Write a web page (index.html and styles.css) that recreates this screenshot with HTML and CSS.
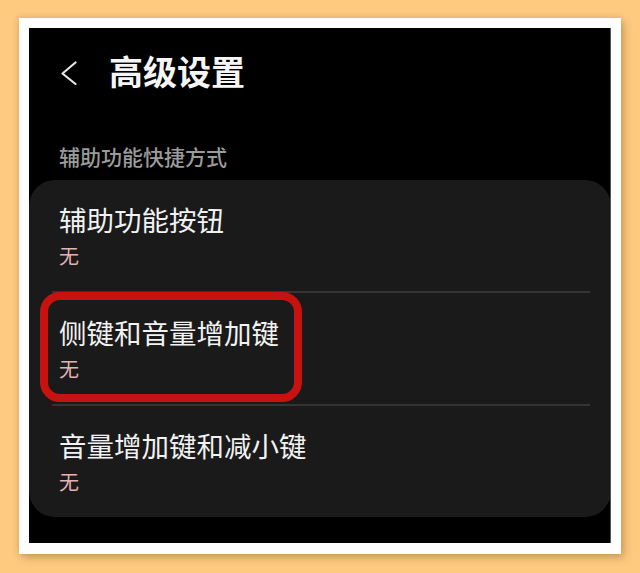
FILE: index.html
```html
<!DOCTYPE html>
<html lang="zh-CN">
<head>
<meta charset="utf-8">
<link rel="stylesheet" href="styles.css">
</head>
<body>
<div class="frame">
  <div class="screen">
    <div class="header">
      <svg class="back" width="16" height="24" viewBox="0 0 16 24"><path d="M14.5 1.5 L1.5 12.5 L14.5 23" fill="none" stroke="#e6e6e6" stroke-width="2.2" stroke-linecap="round" stroke-linejoin="round"/></svg>
      <div class="title">高级设置</div>
    </div>
    <div class="section">辅助功能快捷方式</div>
    <div class="card">
      <div class="item">
        <div class="item-title">辅助功能按钮</div>
        <div class="item-sub">无</div>
      </div>
      <div class="divider"></div>
      <div class="item">
        <div class="item-title">侧键和音量增加键</div>
        <div class="item-sub">无</div>
      </div>
      <div class="divider"></div>
      <div class="item">
        <div class="item-title">音量增加键和减小键</div>
        <div class="item-sub">无</div>
      </div>
    </div>
    <div class="highlight"></div>
  </div>
</div>
</body>
</html>
```

FILE: styles.css
```css
html, body {
  margin: 0;
  padding: 0;
}
body {
  width: 640px;
  height: 573px;
  background: #fdca80;
  overflow: hidden;
  font-family: "Noto Sans CJK SC", "Noto Sans", sans-serif;
}
.frame {
  margin: 18px 0 0 19px;
  width: 582px;
  height: 515px;
  padding: 10px 10px 11px 10px;
  background: #ffffff;
  box-shadow: 3px 4px 8px rgba(120, 80, 20, 0.35), -1px -1px 6px rgba(120, 80, 20, 0.15);
}
.screen {
  position: relative;
  width: 582px;
  height: 515px;
  background: #000000;
  overflow: hidden;
  border-right: 1px solid #555;
  box-sizing: border-box;
}
.header {
  display: flex;
  align-items: center;
  height: 40px;
  margin-top: 23px;
  padding-left: 32px;
}
.back {
  display: block;
  margin-right: 32px;
  margin-top: 3px;
}
.title {
  color: #f5f5f5;
  font-size: 34px;
  line-height: 40px;
  font-weight: 700;
}
.section {
  margin-top: 52px;
  padding-left: 30px;
  color: #9b9b9b;
  font-size: 21px;
  line-height: 26px;
  font-weight: 500;
}
.card {
  margin-top: 11px;
  width: 582px;
  background: #1a1a1a;
  border-radius: 26px;
}
.item {
  height: 111px;
  box-sizing: border-box;
  padding: 22px 0 0 30px;
}
.item-title {
  color: #f2f2f2;
  font-size: 27.5px;
  line-height: 34px;
}
.item-sub {
  margin-top: 8px;
  color: #e4b2b2;
  font-size: 20px;
  line-height: 24px;
}
.divider {
  height: 2px;
  margin: 0 21px 0 23px;
  background: #343434;
}
.highlight {
  position: absolute;
  left: 11px;
  top: 264px;
  width: 262px;
  height: 110px;
  box-sizing: border-box;
  border: 8px solid #c8120f;
  border-radius: 20px;
}
```
